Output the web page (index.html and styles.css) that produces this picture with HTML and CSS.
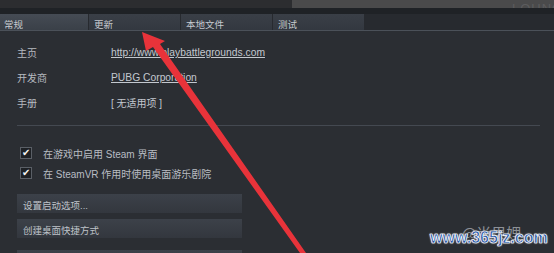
FILE: index.html
```html
<!DOCTYPE html>
<html lang="zh-CN">
<head>
  <meta charset="UTF-8">
  <title>属性 - 常规</title>
  <link rel="stylesheet" href="styles.css">
</head>
<body>
  <div class="topbar">
    <div class="topbar-left"></div>
    <div class="topbar-right"><span class="lounge">LOUNGE</span></div>
  </div>
  <div class="band"></div>

  <div class="tabs">
    <div class="tab active">常规</div>
    <div class="tab">更新</div>
    <div class="tab">本地文件</div>
    <div class="tab">测试</div>
  </div>

  <div class="content">
    <div class="info">
      <div class="row"><span class="label">主页</span><a class="value link" href="#">http://www.playbattlegrounds.com</a></div>
      <div class="row"><span class="label">开发商</span><a class="value link" href="#">PUBG Corporation</a></div>
      <div class="row"><span class="label">手册</span><span class="value">[ 无适用项 ]</span></div>
    </div>

    <div class="divider"></div>

    <div class="checks">
      <label class="check"><span class="box">&#10004;</span>在游戏中启用 Steam 界面</label>
      <label class="check"><span class="box">&#10004;</span>在 SteamVR 作用时使用桌面游乐剧院</label>
    </div>

    <div class="buttons">
      <div class="btn">设置启动选项...</div>
      <div class="btn">创建桌面快捷方式</div>
      <div class="btn btn-more"></div>
    </div>
  </div>

  <!-- annotation overlay -->
  <svg class="arrow" width="554" height="253" viewBox="0 0 554 253">
    <polygon points="142,32 146,51 153,47 300,253 306,253 160,44 165,41" fill="#e8333a"/>
  </svg>

  <div class="watermark">
    <span class="wm-back">@尚果娌</span>
    <span class="wm-front">www.365jz.com</span>
  </div>
</body>
</html>
```

FILE: styles.css
```css
* { box-sizing: border-box; }
body {
  margin: 0;
  width: 554px;
  height: 253px;
  overflow: hidden;
  position: relative;
  background-color: #2b2e33;
  font-family: 'Liberation Sans', 'Noto Sans CJK SC', sans-serif;
  font-size: 10px;
  color: #b9bdc3;
}
.topbar {
  display: flex;
  height: 8px;
}
.topbar-left {
  width: 292px;
  background-color: #2c2d30;
}
.topbar-right {
  flex: 1;
  background-color: #4a4a4b;
  overflow: hidden;
  position: relative;
}
.lounge {
  position: absolute;
  left: 220px;
  top: 1px;
  font-size: 13px;
  color: #5c5c5e;
  letter-spacing: 1px;
}
.band {
  height: 6px;
  background-color: #1f2226;
}
.tabs {
  display: flex;
  height: 17px;
  background-color: #272a2f;
  border-bottom: 1px solid #4b5159;
}
.tab {
  width: 91px;
  margin-right: 1px;
  padding: 3px 0 0 5px;
  background: linear-gradient(#3a3f47, #333840);
  color: #c6cad0;
  font-size: 9.5px;
}
.tab.active {
  background: linear-gradient(#454b54, #3a4048);
  width: 88px;
  padding-left: 4px;
}
.content {
  padding: 9px 14px 0 17px;
}
.row {
  display: flex;
  align-items: center;
  height: 25px;
}
.label {
  width: 94px;
  color: #b6bac0;
}
.value {
  color: #c3c8cf;
}
.link {
  text-decoration: underline;
  font-size: 10.3px;
}
.divider {
  margin-top: 10px;
  height: 1px;
  background-color: #444951;
}
.checks {
  margin-top: 17px;
  padding-left: 3px;
}
.check {
  display: flex;
  align-items: center;
  height: 20px;
  color: #b9bdc3;
}
.box {
  width: 12px;
  height: 12px;
  margin-right: 11px;
  background-color: #1e2125;
  border: 1px solid #5a5f66;
  color: #f2f2f2;
  font-size: 10px;
  line-height: 10px;
  text-align: center;
}
.buttons {
  margin-top: 11px;
  width: 225px;
  display: flex;
  flex-direction: column;
  gap: 6px;
}
.btn {
  height: 19px;
  padding: 4px 0 0 6px;
  background: linear-gradient(#3c4149, #33373e);
  color: #bfc3c9;
  font-size: 9.5px;
}
.btn-more {
  margin-top: 6px;
}
.arrow {
  position: absolute;
  left: 0;
  top: 0;
}
.watermark {
  position: absolute;
  left: 430px;
  top: 220px;
  width: 124px;
  height: 30px;
}
.wm-back {
  position: absolute;
  left: 32px;
  top: 2px;
  font-family: 'Noto Sans CJK SC', sans-serif;
  font-size: 15px;
  color: #8d9096;
}
.wm-front {
  position: absolute;
  left: 0;
  top: 9px;
  font-family: 'Liberation Sans', sans-serif;
  font-weight: bold;
  font-size: 16px;
  color: #2656a6;
  -webkit-text-stroke: 0.6px #ffffff;
  text-shadow: 0 0 2px #ffffff, 0 0 1px #ffffff;
}
```
